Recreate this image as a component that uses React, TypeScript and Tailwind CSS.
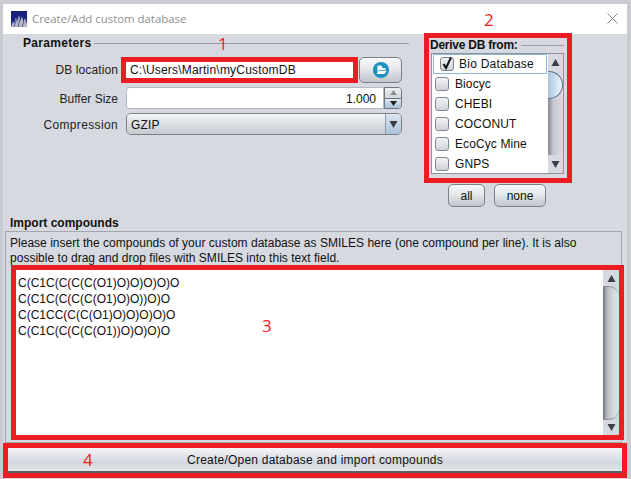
import React from "react";

const FONT = "font-['Liberation_Sans',Arial,sans-serif]";

function Arrow({ up, className = "" }: { up?: boolean; className?: string }) {
  return (
    <svg width="9" height="9" viewBox="0 0 9 9" className={className}>
      <polygon points={up ? "4.5,1 8.5,8 0.5,8" : "0.5,1 8.5,1 4.5,8"} fill="#3c3f45" />
    </svg>
  );
}

function Check({ checked }: { checked?: boolean }) {
  return (
    <div className="w-[14px] h-[14px] rounded-[3px] border border-[#7f8691] bg-[linear-gradient(180deg,#f2f3f5,#cfd2d8)] flex items-center justify-center shrink-0">
      {checked && (
        <svg width="12" height="14" viewBox="0 0 12 14" className="-mt-[2px]">
          <path d="M2.5 8 L5 12 L10 1.5" fill="none" stroke="#111" strokeWidth="2" />
        </svg>
      )}
    </div>
  );
}

function GlossButton({ children, className = "" }: { children: React.ReactNode; className?: string }) {
  return (
    <div className={`border border-[#7b7f86] rounded-[5px] bg-[linear-gradient(180deg,#f7f8f9_0%,#e6e8ec_45%,#d3d6dc_70%,#c3c6cc_100%)] flex items-center justify-center text-[12px] text-[#111] ${className}`}>
      {children}
    </div>
  );
}

const dbs = ["Biocyc", "CHEBI", "COCONUT", "EcoCyc Mine", "GNPS"];

const smiles = [
  "C(C1C(C(C(C(O1)O)O)O)O)O",
  "C(C1C(C(C(C(O1)O)O))O)O",
  "C(C1CC(C(C(O1)O)O)O)O)O",
  "C(C1C(C(C(C(O1))O)O)O)O",
];

export default function App() {
  return (
    <div className={`relative w-[631px] h-[479px] overflow-hidden bg-[#c9cbd1] pl-[3px] pr-[4px] pt-[4px] flex ${FONT}`}>
      <div className="flex-1 flex flex-col min-w-0 bg-[#d6d9e0]">
        {/* title bar */}
        <div className="h-[30px] shrink-0 bg-white flex items-center pl-[8px] pr-[9px]">
          <svg width="16" height="16" viewBox="0 0 16 16" className="shrink-0">
            <rect width="16" height="16" fill="#17207a" />
            <path d="M0 16 L2 10 L3 13 L5 6 L6 11 L8 4 L9.5 10 L11 5 L12.5 11 L14 7 L16 13 V16 Z" fill="#b4b6c6" />
            <path d="M3 16 L5 9 M7 16 L9 8 M11 16 L13 10" stroke="#5a5f90" strokeWidth="1" fill="none" />
          </svg>
          <span className="ml-[5px] text-[11.4px] text-[#8f8f8f] font-['Open_Sans',sans-serif] flex-1">Create/Add custom database</span>
          <svg width="11" height="11" viewBox="0 0 11 11" className="-mt-[2px]">
            <path d="M0.5 0.5 L10.5 10.5 M10.5 0.5 L0.5 10.5" stroke="#8a8a8a" strokeWidth="1" fill="none" />
          </svg>
        </div>

        {/* top section */}
        <div className="h-[180px] shrink-0 flex">
          <div className="w-[406px] shrink-0 pl-[20px] pt-[1px]">
            <div className="flex items-center gap-[3px] h-[16px]">
              <span className="text-[12px] font-bold text-[#111] tracking-[0.3px]">Parameters</span>
              <div className="flex-1 h-px bg-[#9a9ea8]" />
            </div>
            <div className="mt-[6px] flex items-center h-[26px]">
              <span className="w-[95px] text-right text-[12px] text-[#222] tracking-[0.1px]">DB location</span>
              <div className="ml-[3px] w-[237px] h-[26px] border-[5px] border-[#ed1c24] bg-white flex items-center pl-[4px] text-[12px] text-[#111] tracking-[0.2px]">C:\Users\Martin\myCustomDB</div>
              <GlossButton className="ml-px w-[43px] h-[26px]">
                <svg width="18" height="18" viewBox="0 0 18 18">
                  <circle cx="9" cy="9" r="8" fill="#1c8fc0" />
                  <path d="M5.5 4.5 H9.5 L10.5 7 H13.5 V9 H7 L5.5 11.5 Z" fill="#f2f9fc" />
                  <path d="M4.5 13 L6.8 9.8 H14.5 L12.5 13 Z" fill="#fff" />
                </svg>
              </GlossButton>
            </div>
            <div className="mt-[4px] flex items-center h-[22px]">
              <span className="w-[95px] pt-[2px] text-right text-[12px] text-[#222]">Buffer Size</span>
              <div className="ml-[8px] w-[258px] h-[22px] border border-[#b4b8c0] bg-white flex items-center justify-end pr-[7px] pt-[2px] text-[12px] text-[#111] rounded-l-[3px]">1.000</div>
              <div className="w-[18px] h-[22px] flex flex-col border border-[#6f7680] rounded-r-[4px] overflow-hidden">
                <div className="flex-1 bg-[linear-gradient(180deg,#eceef1,#d3d6dc)] flex items-center justify-center">
                  <svg width="7" height="5" viewBox="0 0 7 5"><polygon points="3.5,0 7,5 0,5" fill="#8b8e94" /></svg>
                </div>
                <div className="flex-1 border-t border-[#6f7680] bg-[linear-gradient(180deg,#dfe6ee,#a9c3da)] flex items-center justify-center">
                  <svg width="7" height="5" viewBox="0 0 7 5"><polygon points="0,0 7,0 3.5,5" fill="#222" /></svg>
                </div>
              </div>
            </div>
            <div className="mt-[4px] flex items-center h-[22px]">
              <span className="w-[95px] pt-[2px] text-right text-[12px] text-[#222] tracking-[0.35px]">Compression</span>
              <div className="ml-[8px] w-[276px] h-[22px] flex border border-[#7b7f86] rounded-[5px] overflow-hidden">
                <div className="flex-1 bg-[linear-gradient(180deg,#f4f5f7,#d8dbe0_55%,#c7cad0)] flex items-center pl-[4px] pt-[2px] text-[12px] text-[#111] tracking-[0.2px]">GZIP</div>
                <div className="w-[16px] border-l border-[#8d99a8] bg-[linear-gradient(180deg,#dfe6ee,#a9c3da)] flex items-center justify-center">
                  <Arrow />
                </div>
              </div>
            </div>
          </div>

          <div className="ml-[15px] shrink-0 w-[148px]">
            <div className="w-[148px] h-[150px] border-[5px] border-[#ed1c24] -mt-px pl-px pr-[3px] flex flex-col">
              <div className="flex items-center gap-[3px] h-[14px] shrink-0">
                <span className="text-[12px] font-bold text-[#111] leading-none tracking-[-0.25px]">Derive DB from:</span>
                <div className="flex-1 h-px bg-[#9a9ea8]" />
              </div>
              <div className="ml-px flex-1 flex border border-[#8e9299] min-h-0 mt-px mb-[4px] bg-white">
                <div className="flex-1 min-w-0 flex flex-col">
                  <div className="h-[20px] mx-px flex items-center border border-[#8db7dc] pl-[6px] gap-[5px] text-[12px] text-[#111] tracking-[0.25px] shrink-0">
                    <Check checked />
                    <span>Bio Database</span>
                  </div>
                  {dbs.map((d) => (
                    <div key={d} className="h-[20px] flex items-center pl-[3px] gap-[6px] text-[12px] text-[#111] tracking-[0.1px] shrink-0">
                      <Check />
                      <span>{d}</span>
                    </div>
                  ))}
                </div>
                {/* list scroll bar */}
                <div className="w-[15px] shrink-0 flex flex-col bg-[#d6d9df]">
                  <div className="h-[17px] flex items-center justify-center shrink-0"><Arrow up /></div>
                  <div className="flex-1 flex flex-col min-h-0">
                    <div className="h-[28px] shrink-0 rounded-tr-[14px] rounded-br-[14px] border-t border-r border-b border-[#5f7690] bg-[linear-gradient(90deg,#a9c6de,#f0f6fb)]" />
                    <div className="flex-1 rounded-br-[8px] bg-[linear-gradient(90deg,#85888e_0%,#c4c7cd_35%,#d8dae0_100%)]" />
                    <div className="h-[1px] shrink-0" />
                  </div>
                  <div className="h-[17px] flex items-center justify-center shrink-0"><Arrow /></div>
                </div>
              </div>
            </div>
            <div className="mt-px ml-[24px] flex gap-[9px]">
              <GlossButton className="w-[37px] h-[23px]">all</GlossButton>
              <GlossButton className="w-[52px] h-[23px]">none</GlossButton>
            </div>
          </div>
        </div>

        {/* import section */}
        <div className="flex-1 min-h-0 flex flex-col pl-[2px] pr-[5px]">
          <div className="h-[17px] pl-[5px] flex items-center text-[12px] font-bold text-[#111] shrink-0">Import compounds</div>
          <div className="flex-1 min-h-0 border border-[#a3a6ac] flex flex-col pl-[5px] pb-[2px]">
            <p className="text-[12px] leading-[15px] text-[#111] tracking-[0.02px] pt-[4px] -mb-px pr-[1px] shrink-0 -ml-[1px] -mr-[2px]">
              Please insert the compounds of your custom database as SMILES here (one compound per line). It is also possible to drag and drop files with SMILES into this text field.
            </p>
            <div className="flex-1 min-h-0 border-[5px] border-[#ed1c24] bg-white flex -mr-[3px]">
              <div className="flex-1 pl-[2px] pt-[5px] text-[12px] leading-[16px] text-[#111]">
                {smiles.map((s) => (
                  <div key={s}>{s}</div>
                ))}
              </div>
              {/* text area scroll bar */}
              <div className="w-[16px] shrink-0 flex flex-col bg-[#d6d9df]">
                <div className="h-[16px] flex items-center justify-center shrink-0"><Arrow up /></div>
                <div className="flex-1 rounded-tr-[10px] rounded-br-[10px] border-t border-b border-[#8e9096] bg-[linear-gradient(90deg,#6f7277_0%,#b7babf_25%,#d4d6dc_60%,#dfe1e5_100%)]" />
                <div className="h-[15px] flex items-center justify-center shrink-0"><Arrow /></div>
              </div>
            </div>
          </div>
        </div>

        {/* bottom button */}
        <div className="h-[35px] mb-px shrink-0 border-[5px] border-[#ed1c24] bg-[#d6d9e0]">
          <div className="h-full border-b-2 border-[#5c5f66] bg-[linear-gradient(180deg,#f4f5f7_0%,#e2e4e9_35%,#d3d6dd_65%,#e4e6ea_100%)] flex items-center justify-center text-[12px] text-[#111] tracking-[0.22px]">
            Create/Open database and import compounds
          </div>
        </div>
      </div>

      {/* annotation numbers drawn over the screenshot */}
      <span className="absolute left-[218px] top-[34px] text-[17px] leading-[20px] text-[#ed1c24] font-['Open_Sans',sans-serif]">1</span>
      <span className="absolute left-[484px] top-[10px] text-[17px] leading-[20px] text-[#ed1c24] font-['Open_Sans',sans-serif]">2</span>
      <span className="absolute left-[262px] top-[316px] text-[17px] leading-[20px] text-[#ed1c24] font-['Open_Sans',sans-serif]">3</span>
      <span className="absolute left-[83px] top-[450px] text-[17px] leading-[20px] text-[#ed1c24] font-['Open_Sans',sans-serif]">4</span>
    </div>
  );
}
